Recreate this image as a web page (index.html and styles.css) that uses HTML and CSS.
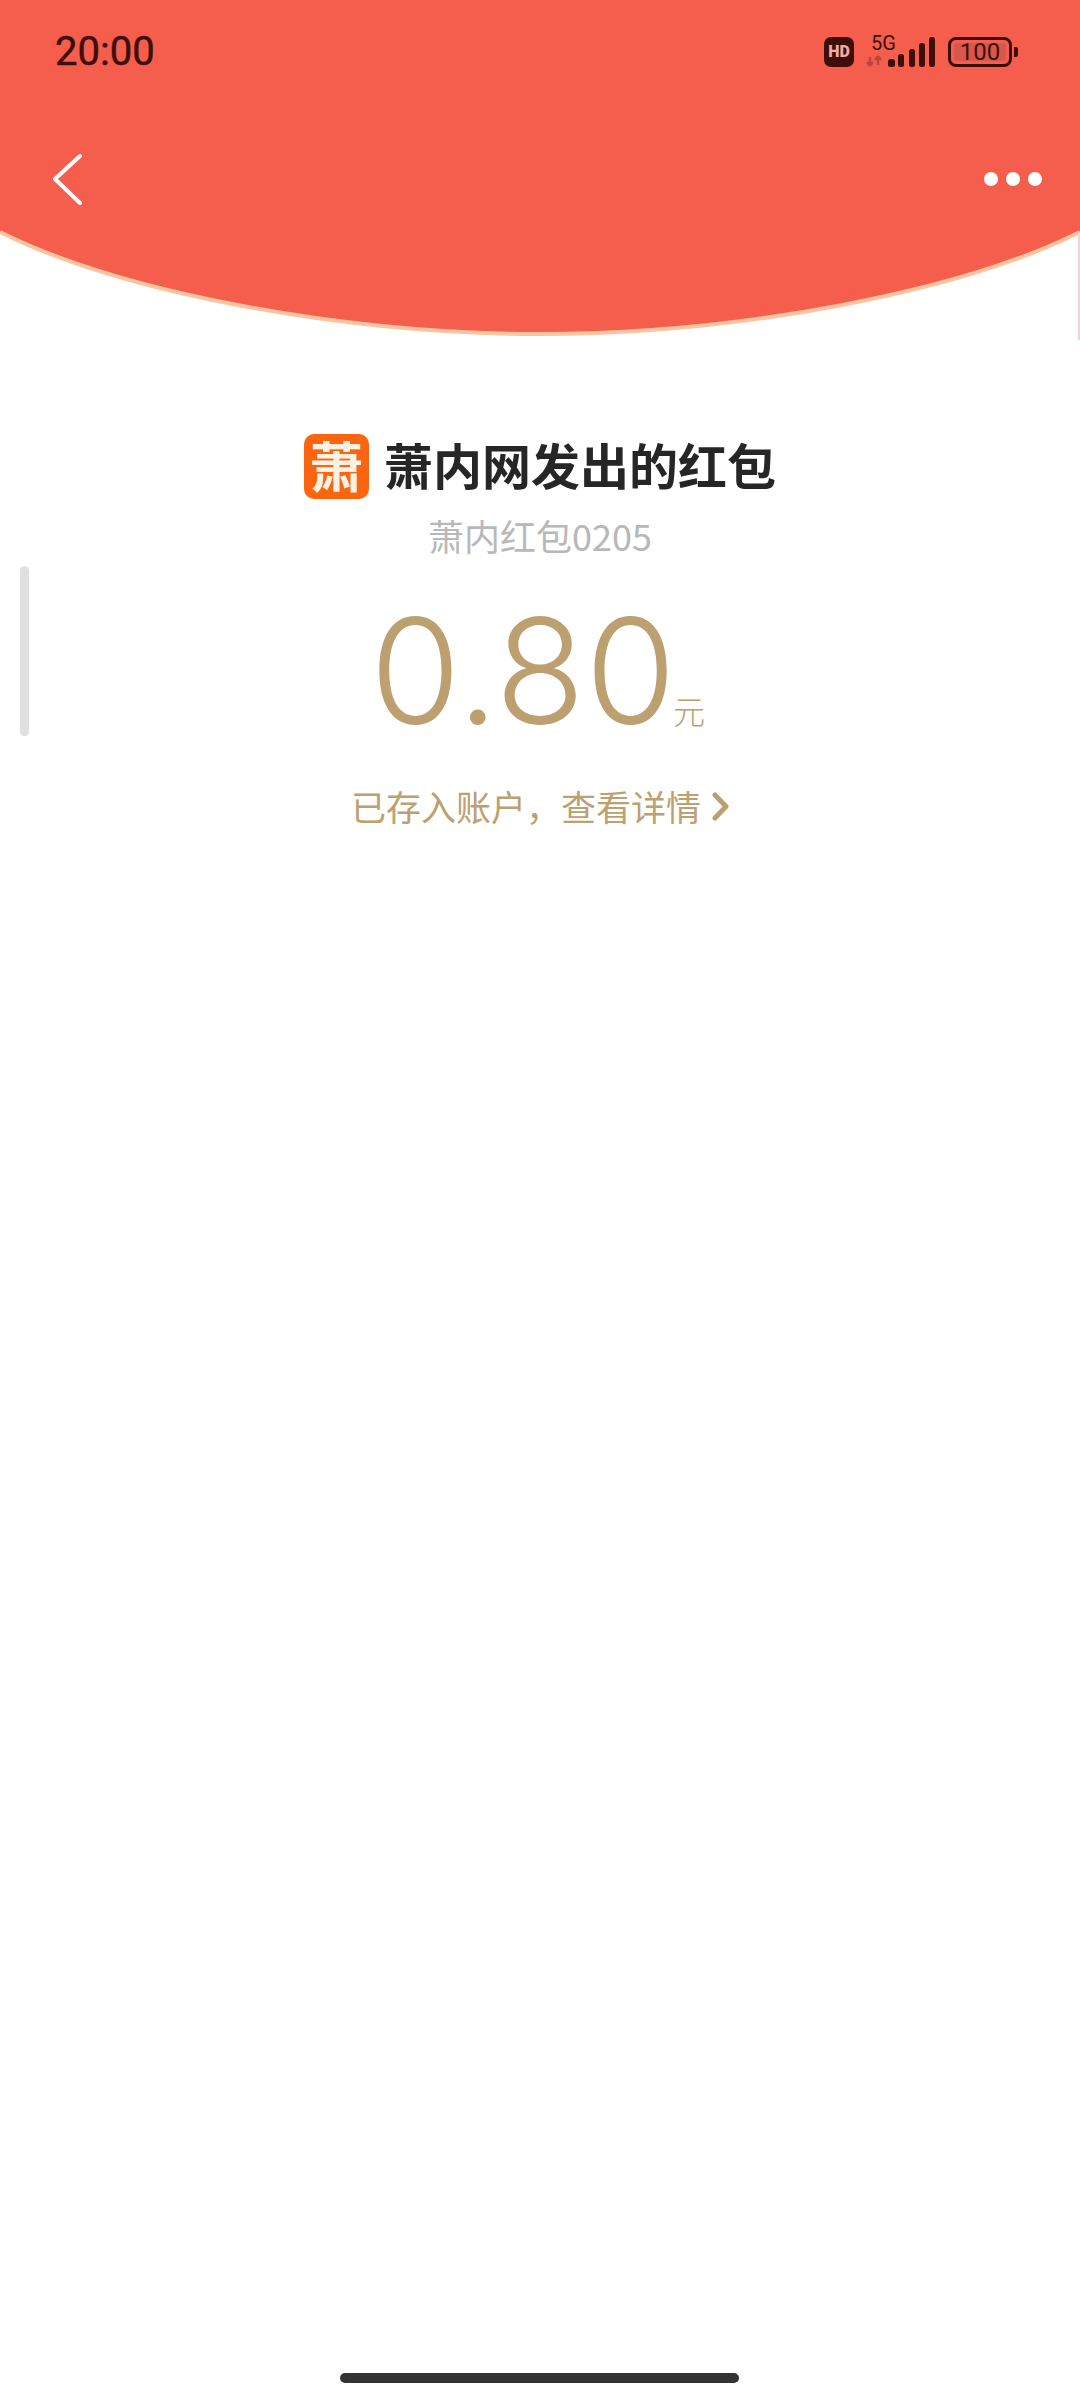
FILE: index.html
```html
<!DOCTYPE html>
<html lang="zh">
<head>
<meta charset="utf-8">
<title>红包详情</title>
<link rel="stylesheet" href="styles.css">
</head>
<body>
<div class="page">
  <header class="hero">
    <svg class="hero-bg" width="1080" height="340" viewBox="0 0 1080 340">
      <path d="M0 0H1080V232C960 292 740 334 540 334C340 334 120 292 0 232Z" fill="#f55d4c"/>
      <path d="M0 232C120 292 340 334 540 334C740 334 960 292 1080 232" fill="none" stroke="#f9c5a0" stroke-width="4"/>
      <path d="M1079 232V340" stroke="#f2d5d2" stroke-width="2"/>
    </svg>
    <div class="status">
      <span class="time">20:00</span>
      <div class="status-icons">
        <span class="hd">HD</span>
        <div class="net">
          <span class="net-label">5G</span>
          <svg class="net-bars" width="70" height="30" viewBox="0 0 70 30">
            <path d="M4 20v9M4 29l-3-4M4 29l3-4M12 28v-9M12 19l-3 4M12 19l3 4" fill="none" stroke="#b8473e" stroke-width="2.4"/>
            <rect x="22" y="22" width="7" height="8" rx="2.5" fill="#3d0f0a"/>
            <rect x="32" y="17" width="6" height="13" rx="2.5" fill="#3d0f0a"/>
            <rect x="43" y="12" width="6" height="18" rx="2.5" fill="#3d0f0a"/>
            <rect x="53" y="6" width="6" height="24" rx="2.5" fill="#3d0f0a"/>
            <rect x="63" y="0" width="6" height="30" rx="2.5" fill="#3d0f0a"/>
          </svg>
        </div>
        <div class="battery">
          <div class="battery-body"><span class="battery-fill">100</span></div>
          <span class="battery-cap"></span>
        </div>
      </div>
    </div>
    <nav class="nav">
      <svg class="back" width="32" height="52" viewBox="0 0 32 52">
        <path d="M28 3L3 26L28 50" fill="none" stroke="#fff" stroke-width="4" stroke-linecap="round" stroke-linejoin="round"/>
      </svg>
      <div class="more"><i></i><i></i><i></i></div>
    </nav>
  </header>
  <span class="scrollbar"></span>
  <main class="content">
    <div class="sender">
      <span class="logo">萧</span>
      <h1 class="title">萧内网发出的红包</h1>
    </div>
    <p class="wish">萧内红包0205</p>
    <div class="amount"><span class="num">0.80</span><span class="unit">元</span></div>
    <a class="link">已存入账户，查看详情<svg class="chev" width="17" height="29" viewBox="0 0 17 29"><path d="M3 3L14 14.5L3 26" fill="none" stroke="#bda06f" stroke-width="5" stroke-linecap="round" stroke-linejoin="round"/></svg></a>
  </main>
  <span class="home"></span>
</div>
</body>
</html>
```
FILE: styles.css
```css
* { box-sizing: border-box; }
html, body { margin: 0; padding: 0; background: #fff; }
body { font-family: "Noto Sans CJK SC", Roboto, sans-serif; }
.page { position: relative; width: 1080px; height: 2400px; overflow: hidden; background: #fff; display: flex; flex-direction: column; }
.hero { position: relative; height: 340px; flex: none; }
.hero-bg { position: absolute; left: 0; top: 0; }
.status { position: relative; display: flex; justify-content: space-between; align-items: center; height: 104px; padding: 0 62px 0 55px; }
.time { font: 400 40px/1 Roboto, sans-serif; color: #3d0f0a; -webkit-text-stroke: 0.5px #3d0f0a; }
.status-icons { display: flex; align-items: center; gap: 12px; }
.hd { width: 30px; height: 30px; border-radius: 7px; background: #3d0f0a; color: #f3a99f; font: 900 16px/30px Roboto, sans-serif; text-align: center; }
.net { position: relative; width: 70px; height: 30px; }
.net-label { position: absolute; left: 5px; top: -4px; font: 400 20px/1 Roboto, sans-serif; color: #3d0f0a; }
.net-bars { position: absolute; left: 0; top: 0; overflow: visible; }
.battery { display: flex; align-items: center; gap: 2px; }
.battery-body { width: 64px; height: 30px; border: 3px solid #3d0f0a; border-radius: 8px; padding: 3px; display: flex; }
.battery-fill { flex: 1; background: #d9574a; border-radius: 3px; color: #3d0f0a; font: 400 24px/18px Roboto, sans-serif; text-align: center; }
.battery-cap { width: 4px; height: 10px; background: #3d0f0a; border-radius: 0 2px 2px 0; }
.nav { position: relative; display: flex; justify-content: space-between; align-items: center; height: 52px; margin-top: 49px; padding: 0 38px 0 52px; }
.more { display: flex; gap: 8px; }
.more i { width: 14px; height: 14px; border-radius: 50%; background: #fff; }
.scrollbar { position: absolute; left: 20px; top: 566px; width: 9px; height: 170px; border-radius: 5px; background: #e0e0e0; }
.content { display: flex; flex-direction: column; align-items: center; padding-top: 94px; }
.sender { display: flex; align-items: center; gap: 16px; height: 65px; }
.logo { width: 65px; height: 65px; border-radius: 10px; background: #fb6510; color: #fdf1e4; font: 700 54px/62px "Noto Sans CJK SC", sans-serif; text-align: center; }
.title { margin: 0 0 5px -1px; font: 700 49px/60px "Noto Sans CJK SC", sans-serif; color: #262626; }
.wish { margin: 14px 0 0; font: 400 36px/44px "Noto Sans CJK SC", Roboto, sans-serif; color: #b8b8b8; }
.amount { display: flex; align-items: baseline; margin-top: 39px; height: 150px; padding-right: 5px; color: #bda06f; }
.num { font: 300 147px/150px Inter, sans-serif; }
.unit { margin-left: -3px; font: 300 32px/1 "Noto Sans CJK SC", sans-serif; }
.link { display: flex; align-items: center; margin-top: 35px; font: 400 35px/50px "Noto Sans CJK SC", sans-serif; color: #bda06f; }
.chev { margin-left: 11px; }
.home { position: absolute; left: 340px; top: 2373px; width: 399px; height: 10px; border-radius: 5px; background: #333; }
```
